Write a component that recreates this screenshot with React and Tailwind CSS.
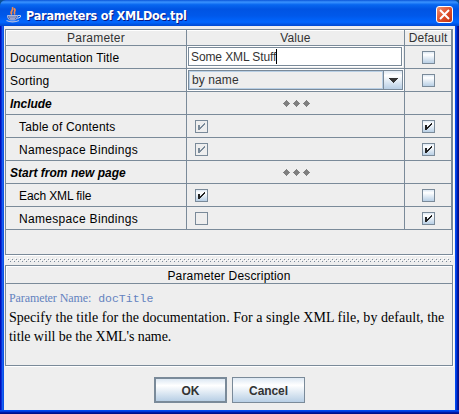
import React from "react";

function Check({ on, disabled }) {
  const bg = disabled ? "bg-[#eeeeee]" : "bg-linear-to-b from-[#dde8f3] via-white via-25% to-[#b8cfe5]";
  return (
    <div className={"h-[13px] w-[13px] shrink-0 border border-[#7a8a99] " + bg}>
      {on && (
        <svg width="11" height="11" viewBox="0 0 11 11" shapeRendering="crispEdges" className={disabled ? "block text-[#7a8a99]" : "block text-[#222]"} fill="currentColor">
          <path d="M2 4h2v5h-2zM4 6h1v2h-1zM5 5h1v2h-1zM6 4h1v2h-1zM7 3h1v2h-1zM8 2h1v2h-1z" />
        </svg>
      )}
    </div>
  );
}

function Diamonds() {
  return (
    <svg width="27" height="7" viewBox="0 0 27 7" shapeRendering="crispEdges" fill="#808080" className="block">
      {[0, 10, 20].map((x) => (
        <path key={x} transform={`translate(${x} 0)`} d="M3 0h1v1h1v1h1v1h1v1h-1v1h-1v1h-1v1h-1v-1h-1v-1h-1v-1h-1v-1h1v-1h1v-1h1z" />
      ))}
    </svg>
  );
}

function Row({ label, group, value, def, text = "" }) {
  return (
    <div className="flex h-[23px] border-b border-[#7a8a99]">
      <div className={"flex w-[181px] items-center border-r border-[#7a8a99] pt-[2px] " + (group ? "pl-1 font-bold italic " : "") + text}>{label}</div>
      <div className={"flex w-[218px] border-r border-[#7a8a99] " + (group ? "justify-center pt-2 pl-[2px]" : "")}>
        {group ? <Diamonds /> : value}
      </div>
      <div className="flex w-[47px] justify-center border-r border-[#7a8a99] pt-[5px] pl-px">{def}</div>
    </div>
  );
}

const valueCheck = (on, disabled) => (
  <div className="pt-[5px] pl-2">
    <Check on={on} disabled={disabled} />
  </div>
);

function Cup() {
  return (
    <svg width="17" height="17" viewBox="0 0 17 17" fill="none" className="block">
      <path d="M6 8.500C3 6 8 4.500 6.500 1M9 8.500C6.500 6 11 4.500 8 2.500" stroke="#f08a50" strokeWidth="1.700" />
      <path d="M1.500 9.500h10c0 3-1.500 4.500-3 4.500h-4c-1.500 0-3-1.500-3-4.500z" fill="#5868a8" stroke="#c8d0e8" strokeWidth=".8" />
      <path d="M12 9.500h2.500v1.500L11.500 12.500" stroke="#c8d0e8" />
      <path d="M.5 14.500c3 1.700 9 1.700 12.500 0" stroke="#b0bce0" strokeWidth="1.300" />
      <path d="M3 11h7M4 12.800h5" stroke="#e0e4f4" strokeWidth=".7" />
    </svg>
  );
}

export default function App() {
  return (
    <div className="flex h-[414px] w-[459px] flex-col overflow-hidden bg-[#0b4f98] font-['Liberation_Sans',Arial,sans-serif] text-[12px] leading-[15px] whitespace-nowrap text-black">
      <div className="flex h-[26px] shrink-0 items-start rounded-t-[6px] bg-[linear-gradient(180deg,#0a55d8_0%,#3a93ff_8%,#0867f0_18%,#0054e3_35%,#0058ea_60%,#0066ff_85%,#0048d0_100%)] pt-1 pr-[6px] pl-[6px]">
        <div className="mt-[2px] w-5"><Cup /></div>
        <div className="mt-[2px] grow font-['DejaVu_Sans_Condensed','DejaVu_Sans',sans-serif] text-[12.5px] leading-[19px] font-bold tracking-[-0.22px] text-white [text-shadow:1px_1px_#0a1883]">Parameters of XMLDoc.tpl</div>
        <div className="mt-[2px] flex h-[17px] w-[17px] items-center justify-center rounded-[3px] border border-white bg-linear-to-br from-[#f09070] via-[#e0502a] to-[#c03010]">
          <svg width="11" height="11" viewBox="0 0 11 11" stroke="#fff" strokeWidth="2"><path d="M1 1l9 9M10 1l-9 9" /></svg>
        </div>
      </div>

      <div className="flex h-[384px] shrink-0 bg-[#eeeeee]">
        <div className="w-1 shrink-0 bg-[linear-gradient(90deg,#0010b8_0_1px,#0a2ed8_1px_2px,#1560f0_2px_3px,#0a50e8_3px)]" />
        <div className="flex w-[451px] flex-col pt-[3px] pr-[2px] pl-px">
          <div className="h-[226px] w-[448px] border border-[#7a8a99] shadow-[1px_1px_#fff]">
            <div className="flex h-4 border-b border-[#7a8a99] text-[#333] shadow-[inset_1px_1px_#fff]">
              <div className="w-[181px] border-r border-[#7a8a99] text-center leading-[17px] tracking-[0.2px]">Parameter</div>
              <div className="w-[218px] border-r border-[#7a8a99] text-center leading-[17px] tracking-[0.1px]">Value</div>
              <div className="w-[47px] border-r border-[#7a8a99] text-center leading-[17px] tracking-[0.1px]">Default</div>
            </div>
            <Row
              label="Documentation Title"
              text="pl-1 tracking-[0.17px]"
              value={
                <div className="mt-px ml-px flex h-[19px] w-[214px] items-center border border-[#7a8a99] bg-white pt-px pl-[2px] tracking-[-0.1px] text-[#333] shadow-[0_0_0_1px_#fff]">
                  Some XML Stuff<span className="-mt-[2px] h-[15px] w-px bg-black" />
                </div>
              }
              def={<Check />}
            />
            <Row
              label="Sorting"
              text="pl-1 tracking-[0.2px]"
              value={
                <div className="mt-px ml-px flex h-5 w-[215px] border border-[#7a8a99] text-[#333] shadow-[0_0_0_1px_#fff]">
                  <div className="flex w-[194px] items-center border border-[#b8cfe5] pt-px pl-[2px] tracking-[0.1px]">by name</div>
                  <div className="flex w-[19px] items-center justify-center border-l border-[#7a8a99] bg-linear-to-b from-[#dde8f3] via-white via-25% to-[#b8cfe5]">
                    <svg width="10" height="5" viewBox="0 0 10 5" shapeRendering="crispEdges"><path d="M0 0h10L5 5z" fill="#333" /></svg>
                  </div>
                </div>
              }
              def={<Check />}
            />
            <Row group label="Include" text="tracking-[-0.05px]" />
            <Row label="Table of Contents" text="pl-[13px] tracking-[0.18px]" value={valueCheck(true, true)} def={<Check on />} />
            <Row label="Namespace Bindings" text="pl-[13px] tracking-[0.32px]" value={valueCheck(true, true)} def={<Check on />} />
            <Row group label="Start from new page" text="tracking-[0.02px]" />
            <Row label="Each XML file" text="pl-[13px] tracking-[-0.1px]" value={valueCheck(true, false)} def={<Check />} />
            <Row label="Namespace Bindings" text="pl-[13px] tracking-[0.32px]" value={valueCheck(false, true)} def={<Check on />} />
          </div>

          <div className="flex h-[10px] w-[448px] items-center pl-[2px]">
            <svg width="444" height="4" shapeRendering="crispEdges">
              <defs>
                <pattern id="grip" width="4" height="4" patternUnits="userSpaceOnUse">
                  <path d="M0 0h1v1h-1zM2 2h1v1h-1z" fill="#fff" />
                  <path d="M1 1h1v1h-1zM3 3h1v1h-1z" fill="#7a8a99" />
                </pattern>
              </defs>
              <rect width="444" height="4" fill="url(#grip)" />
            </svg>
          </div>

          <div className="h-[101px] w-[448px] border border-[#7a8a99] shadow-[1px_1px_#fff]">
            <div className="h-[18px] border-b border-[#7a8a99] text-center leading-[20px] tracking-[0.18px] shadow-[inset_1px_1px_#fff]">Parameter Description</div>
            <div className="pt-[5px] pl-[3px] font-['Liberation_Serif',serif] text-[14px] leading-[19px]">
              <div className="text-[12px] tracking-[-0.1px] text-[#6382bf]">
                Parameter Name:<span className="ml-[7px] font-['Liberation_Mono',monospace] text-[11.5px] tracking-normal">docTitle</span>
              </div>
              <div className="tracking-[0.035px]">Specify the title for the documentation. For a single XML file, by default, the</div>
              <div className="tracking-[-0.07px]">title will be the XML's name.</div>
            </div>
          </div>

          <div className="mt-[11px] flex gap-[5px] pl-[149px] font-bold text-[#333]">
            <button className="h-[26px] w-[73px] border-2 border-[#7a8a99] bg-linear-to-b from-[#dde8f3] via-white via-30% to-[#b8cfe5] pt-[2px]">OK</button>
            <button className="h-[26px] w-[73px] border border-[#7a8a99] bg-linear-to-b from-[#dde8f3] via-white via-30% to-[#b8cfe5] pt-[2px] tracking-[-0.1px]">Cancel</button>
          </div>
        </div>
        <div className="w-1 shrink-0 bg-[linear-gradient(90deg,#0048f0_0_1px,#0038d8_1px_2px,#0018a8_2px_3px,#001088_3px)]" />
      </div>
      <div className="h-1 shrink-0 bg-[linear-gradient(180deg,#0048f0_0_1px,#0038d8_1px_2px,#0018a8_2px_3px,#001088_3px)]" />
    </div>
  );
}
